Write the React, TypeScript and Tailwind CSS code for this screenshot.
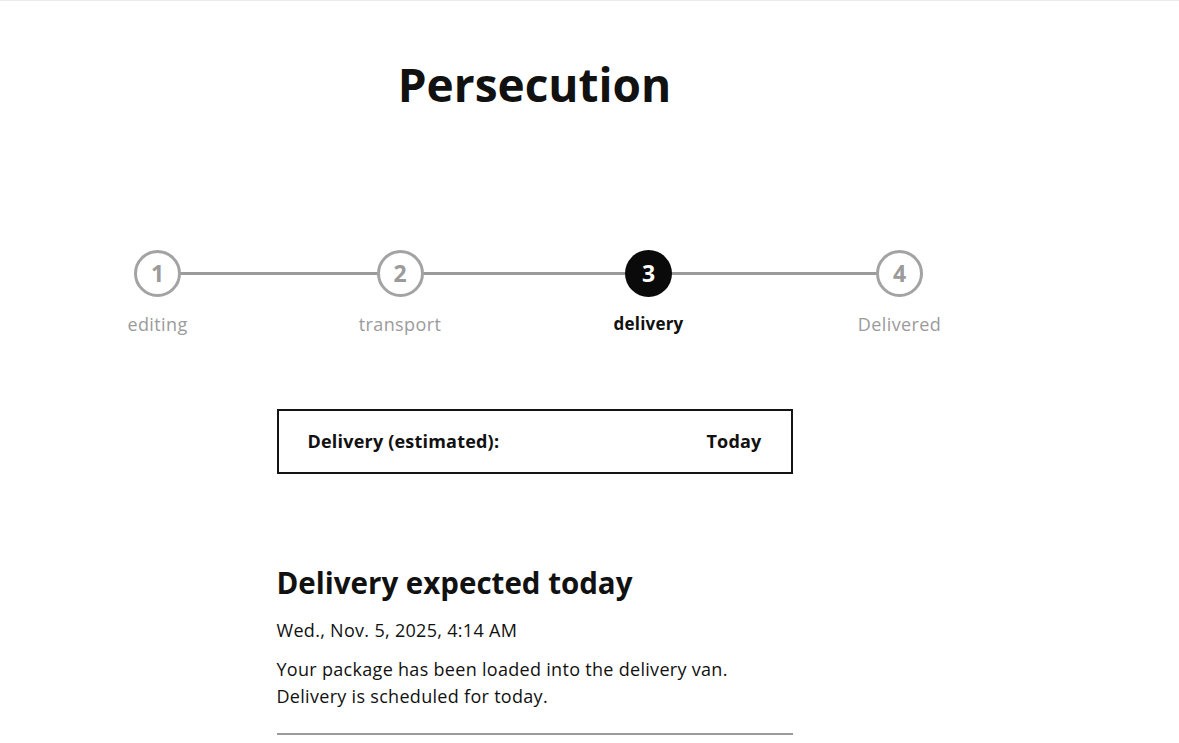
import React from "react";

const steps = [
  { n: "1", label: "editing", state: "done", w: "w-[59px]" },
  { n: "2", label: "transport", state: "done", w: "w-[78px]" },
  { n: "3", label: "delivery", state: "active", w: "w-[71px]" },
  { n: "4", label: "Delivered", state: "todo", w: "w-[83px]" },
];

export default function App() {
  return (
    <div
      className="min-h-screen bg-white border-t border-[#ececec] text-[#111]"
      style={{ fontFamily: "'Open Sans', Lato, sans-serif" }}
    >
      <div className="w-[1069px] flex flex-col items-center">
        <h1 className="mt-[54px] text-[46px] font-bold leading-[58px]">
          Persecution
        </h1>

        <div className="relative mt-[137px] w-[813px] flex justify-between">
          <div className="absolute top-[22px] left-[30px] right-[42px] h-[3px] bg-[#9b9b9b]" />
          {steps.map((s) => (
            <div key={s.n} className={`relative flex flex-col items-center ${s.w}`}>
              {s.state === "active" ? (
                <div className="w-[47px] h-[47px] rounded-full bg-[#0a0a0a] flex items-center justify-center text-white text-[23px] font-bold">
                  {s.n}
                </div>
              ) : (
                <div className="w-[47px] h-[47px] rounded-full bg-white border-[3px] border-[#a3a3a3] flex items-center justify-center text-[#9b9b9b] text-[23px] font-bold">
                  {s.n}
                </div>
              )}
              <div
                className={
                  s.state === "active"
                    ? "mt-[15px] whitespace-nowrap text-[17px] leading-[24px] tracking-[0.2px] font-bold text-[#111]"
                    : "mt-[15px] whitespace-nowrap text-[18px] leading-[24px] tracking-[0.4px] text-[#9b9b9b]"
                }
              >
                {s.label}
              </div>
            </div>
          ))}
        </div>

        <div className="mt-[73px] w-[516px] h-[65px] border-2 border-[#141414] px-[29px] flex items-center justify-between text-[18px] tracking-[0.2px] font-bold">
          <span>Delivery (estimated):</span>
          <span>Today</span>
        </div>

        <div className="w-[516px] flex flex-col">
          <h2 className="mt-[91px] text-[29.5px] leading-[36px] font-bold">
            Delivery expected today
          </h2>
          <div className="mt-[17px] text-[18px] leading-[24px] tracking-[0.3px]">
            Wed., Nov. 5, 2025, 4:14 AM
          </div>
          <p className="mt-[14px] text-[18px] leading-[27px] tracking-[0.3px]">
            Your package has been loaded into the delivery van.
            <br />
            Delivery is scheduled for today.
          </p>
          <div className="mt-[23px] border-t-2 border-[#9a9a9a]" />
        </div>
      </div>
    </div>
  );
}
